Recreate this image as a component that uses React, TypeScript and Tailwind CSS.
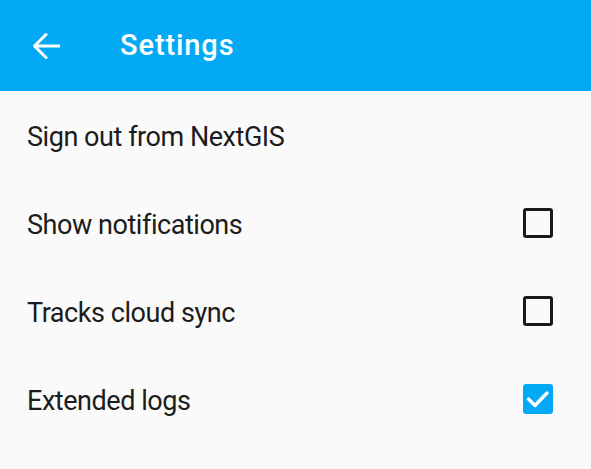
import React from "react";

const rows = [
  { label: "Sign out from NextGIS", box: null as null | boolean },
  { label: "Show notifications", box: false },
  { label: "Tracks cloud sync", box: false },
  { label: "Extended logs", box: true },
];

function Box({ checked }: { checked: boolean }) {
  if (checked) {
    return (
      <div className="w-[30px] h-[30px] rounded-[3px] bg-[#03a9f4]">
        <svg width="30" height="30" viewBox="0 0 30 30">
          <path d="M5.5 15 L12 21.5 L24 9" stroke="white" strokeWidth="3.4" fill="none" strokeLinecap="round" strokeLinejoin="round" />
        </svg>
      </div>
    );
  }
  return <div className="w-[30px] h-[30px] rounded-[3px] border-[3px] border-[#1a1a1a]" />;
}

export default function App() {
  return (
    <div className="w-[591px] h-[469px] bg-[#fafafa] overflow-hidden" style={{ fontFamily: "Roboto, 'Noto Sans', sans-serif" }}>
      <div className="h-[91px] bg-[#03a9f4] flex items-center">
        <div className="w-[120px] flex items-center pl-[32px]">
          <svg width="28" height="28" viewBox="0 0 28 28">
            <path d="M27 14 H3 M14 2.5 L2.5 14 L14 25.5" stroke="white" strokeWidth="3" fill="none" strokeLinecap="round" strokeLinejoin="round" />
          </svg>
        </div>
        <div className="text-white text-[29px] font-medium leading-none tracking-[0.9px]">Settings</div>
      </div>
      <div className="flex flex-col">
        {rows.map((r) => (
          <div key={r.label} className="h-[88px] flex items-center justify-between pl-[27px] pr-[38px]">
            <span className="text-[27px] text-[#1c1c1c] leading-none tracking-[-0.45px] pt-[5px]">{r.label}</span>
            {r.box !== null && <Box checked={r.box} />}
          </div>
        ))}
      </div>
    </div>
  );
}
